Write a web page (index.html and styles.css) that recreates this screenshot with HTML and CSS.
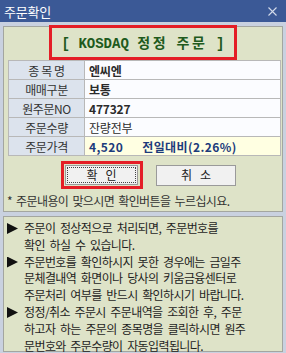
FILE: index.html
```html
<!DOCTYPE html>
<html>
<head>
  <meta charset="utf-8">
  <title>주문확인</title>
  <link rel="stylesheet" href="styles.css">
</head>
<body>
  <div class="window">
    <div class="titlebar">
      <span class="title">주문확인</span>
      <svg class="close" width="9" height="9" viewBox="0 0 9 9">
        <path d="M0.5 0.5 L8.5 8.5 M8.5 0.5 L0.5 8.5" stroke="#d3dbea" stroke-width="1.1" fill="none"/>
      </svg>
    </div>

    <div class="panel order">
      <div class="heading"><span>[ KOSDAQ <span class="wide">정정</span> <span class="wide">주문</span> ]</span></div>

      <table class="info">
        <tr><th>종 목 명</th><td class="strong">엔씨엔</td></tr>
        <tr><th>매매구분</th><td class="strong">보통</td></tr>
        <tr><th>원주문NO</th><td class="strong">477327</td></tr>
        <tr><th>주문수량</th><td>잔량전부</td></tr>
        <tr><th>주문가격</th><td class="price"><span class="amount">4,520</span>전일대비(2.26%)</td></tr>
      </table>

      <div class="buttons">
        <div class="mark">
          <button class="btn focused">확&nbsp;&nbsp;&nbsp;인</button>
        </div>
        <button class="btn">취&nbsp;&nbsp;&nbsp;소</button>
      </div>

      <div class="note">* 주문내용이 맞으시면 확인버튼을 누르십시요.</div>
    </div>

    <div class="panel help">
      <div class="item"><span class="arrow"></span><p>주문이 정상적으로 처리되면, 주문번호를<br>확인 하실 수 있습니다.</p></div>
      <div class="item"><span class="arrow"></span><p>주문번호를 확인하시지 못한 경우에는 금일주<br>문체결내역 화면이나 당사의 키움금융센터로<br>주문처리 여부를 반드시 확인하시기 바랍니다.</p></div>
      <div class="item"><span class="arrow"></span><p>정정/취소 주문시 주문내역을 조회한 후, 주문<br>하고자 하는 주문의 종목명을 클릭하시면 원주<br>문번호와 주문수량이 자동입력됩니다.</p></div>
    </div>
  </div>
</body>
</html>
```

FILE: styles.css
```css
html, body { margin: 0; }
* { box-sizing: border-box; }
body {
  width: 286px;
  height: 353px;
  overflow: hidden;
  background: #c9d1e0;
  font-family: "Noto Sans CJK KR", "Noto Sans", sans-serif;
  color: #2a2a2a;
}
.window {
  display: flex;
  flex-direction: column;
  height: 353px;
}

/* title bar */
.titlebar {
  flex: none;
  height: 22px;
  background: #3b5996;
  display: flex;
  align-items: center;
  justify-content: space-between;
  padding: 0 9px 0 4px;
  margin-bottom: 4px;
}
.title {
  color: #fff;
  font-size: 13px;
  letter-spacing: -0.2px;
}

/* panels */
.panel {
  flex: none;
  margin: 0 3px;
  border: 1px solid #a3a6a0;
  background: #dee3c8;
}
.order {
  height: 186px;
  padding: 0 2px;
}
.help {
  margin-top: 4px;
  height: 136px;
  padding: 3px 0 0 3px;
}

/* red-marked heading */
.heading {
  margin: -2px 0 0 43px;
  width: 188px;
  height: 35px;
  border: 3px solid #e41e26;
  text-align: center;
  line-height: 28px;
  font-family: "Liberation Mono", monospace;
  font-weight: bold;
  font-size: 14px;
  color: #205a1c;
  white-space: pre;
}
.heading .wide {
  font-family: "Noto Sans CJK KR", sans-serif;
  font-size: 14px;
  letter-spacing: 2.6px;
}

/* info table */
.info {
  margin: 0 0 0 2px;
  width: 273px;
  border-collapse: collapse;
  font-size: 12px;
}
.info th, .info td {
  height: 19px;
  padding: 0;
  border: 1px solid #b8b8b8;
  white-space: nowrap;
}
.info th {
  width: 76px;
  background: #dce3ed;
  font-weight: normal;
  color: #333;
  letter-spacing: -0.4px;
}
.info td {
  background: #fbfcff;
  padding-left: 4px;
  color: #2b2b2b;
  letter-spacing: -0.2px;
}
.info td.strong { font-weight: bold; }
.info td.price {
  background: #ffffe2;
  color: #1c3b7c;
  font-weight: bold;
  letter-spacing: 0.4px;
}
.amount { margin-right: 19px; }

/* buttons */
.buttons {
  display: flex;
  align-items: center;
  height: 28px;
  margin: 5px 0 0 55px;
  gap: 13px;
}
.mark {
  display: flex;
  border: 3px solid #e41e26;
  padding: 1px 2px 1px 1px;
}
.btn {
  display: block;
  width: 80px;
  height: 21px;
  padding: 0;
  margin: 0;
  background: #f1f1f1;
  border: 1px solid #9a9a9a;
  font-family: "Noto Sans CJK KR", sans-serif;
  font-size: 12px;
  color: #222;
  line-height: 1;
}
.btn.focused {
  width: 73px;
  height: 20px;
  outline: 1px dotted #444;
  outline-offset: -3px;
}

.note {
  margin: 3px 0 0 1px;
  font-size: 12px;
  line-height: 17px;
  letter-spacing: -0.6px;
  word-spacing: 2px;
  color: #333;
  white-space: nowrap;
}

/* help text */
.item {
  display: flex;
  align-items: flex-start;
  font-size: 12px;
  line-height: 16.8px;
  color: #1e1e1e;
}
.item p {
  margin: 0;
  white-space: nowrap;
  letter-spacing: -0.6px;
  word-spacing: 2.5px;
}
.arrow {
  flex: none;
  width: 11px;
  height: 11px;
  margin: 3px 6px 0 0;
  background: #111;
  clip-path: polygon(0 0, 100% 50%, 0 100%);
}
```
